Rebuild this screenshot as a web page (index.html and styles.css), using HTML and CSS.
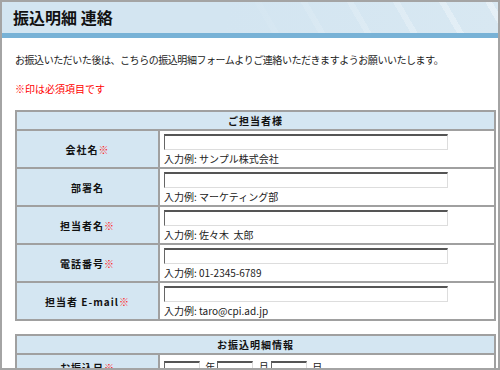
FILE: index.html
```html
<!DOCTYPE html>
<html lang="ja">
<head>
    <meta charset="UTF-8">
    <title>振込明細 連絡</title>
    <link rel="stylesheet" href="styles.css">
</head>
<body>
    <div class="page">
        <h1 class="titulo">振込明細 連絡</h1>

        <p class="intro">お振込いただいた後は、こちらの振込明細フォームよりご連絡いただきますようお願いいたします。</p>
        <p class="aviso">※印は必須項目です</p>

        <!-- ご担当者様 -->
        <table class="form-table">
            <tr>
                <th colspan="2" class="secao">ご担当者様</th>
            </tr>
            <tr>
                <th>会社名<span class="req">※</span></th>
                <td>
                    <input type="text" class="campo">
                    <div class="exemplo">入力例: サンプル株式会社</div>
                </td>
            </tr>
            <tr>
                <th>部署名</th>
                <td>
                    <input type="text" class="campo">
                    <div class="exemplo">入力例: マーケティング部</div>
                </td>
            </tr>
            <tr>
                <th>担当者名<span class="req">※</span></th>
                <td>
                    <input type="text" class="campo">
                    <div class="exemplo">入力例: 佐々木&nbsp; 太郎</div>
                </td>
            </tr>
            <tr>
                <th>電話番号<span class="req">※</span></th>
                <td>
                    <input type="text" class="campo">
                    <div class="exemplo">入力例: 01-2345-6789</div>
                </td>
            </tr>
            <tr>
                <th>担当者 E-mail<span class="req">※</span></th>
                <td>
                    <input type="text" class="campo">
                    <div class="exemplo">入力例: taro@cpi.ad.jp</div>
                </td>
            </tr>
        </table>

        <!-- お振込明細情報 -->
        <table class="form-table">
            <tr>
                <th colspan="2" class="secao">お振込明細情報</th>
            </tr>
            <tr>
                <th>お振込日<span class="req">※</span></th>
                <td class="data">
                    <input type="text" class="campo-curto"> 年
                    <input type="text" class="campo-curto"> 月
                    <input type="text" class="campo-curto"> 日
                </td>
            </tr>
        </table>
    </div>
</body>
</html>
```

FILE: styles.css
```css
body {
    margin: 0;
    font-family: "Noto Sans CJK JP", "DejaVu Sans", sans-serif;
    color: #222;
    background-color: #fff;
}
.page {
    height: 370px;
    box-sizing: border-box;
    border: 2px solid #a4a4a4;
    overflow: hidden;
}
/* Cabeçalho com listras */
.titulo {
    margin: 0;
    height: 31px;
    line-height: 31px;
    padding-left: 11px;
    font-size: 16px;
    font-weight: bold;
    color: #111;
    border-bottom: 5px solid #78b2d6;
    background:
        linear-gradient(to right, #d3e5f1 45%, rgba(211,229,241,0) 100%),
        repeating-linear-gradient(60deg, rgba(255,255,255,0) 0 34px, rgba(255,255,255,0.35) 34px 40px),
        #d8e8f2;
}
.intro {
    margin: 15px 0 0 13px;
    font-size: 10px;
    line-height: 14px;
    letter-spacing: -0.45px;
}
.aviso {
    margin: 15px 0 0 13px;
    font-size: 10px;
    line-height: 14px;
    color: #f00;
}
.form-table {
    margin: 14px 0 0 13px;
    width: 481px;
    border-collapse: collapse;
    border: 2px solid #a0a0a0;
    font-size: 10px;
}
.form-table + .form-table {
    margin-top: 13px;
}
.form-table th,
.form-table td {
    border: 2px solid #a0a0a0;
}
.form-table th {
    width: 139px;
    background-color: #d4e6f2;
    font-weight: bold;
    text-align: center;
    color: #111;
    letter-spacing: 1px;
}
.form-table th.secao {
    height: 17px;
    padding: 0;
}
.form-table td {
    padding: 2px 4px 1px;
    line-height: 14px;
    vertical-align: top;
}
.req {
    color: #f22;
}
.campo {
    display: block;
    width: 284px;
    height: 16px;
    box-sizing: border-box;
    margin: 1px 0 2px;
    border: 1px solid #ddd;
    border-top: 2px solid #555;
    border-left: 1px solid #666;
    background: #fff;
}
.exemplo {
    font-size: 10px;
    line-height: 14px;
    color: #222;
}
.data {
    white-space: nowrap;
}
.campo-curto {
    width: 36px;
    height: 18px;
    box-sizing: border-box;
    margin: 4px 3px 0 0;
    border: 1px solid #ddd;
    border-top: 2px solid #555;
    border-left: 1px solid #666;
    vertical-align: middle;
}
```
